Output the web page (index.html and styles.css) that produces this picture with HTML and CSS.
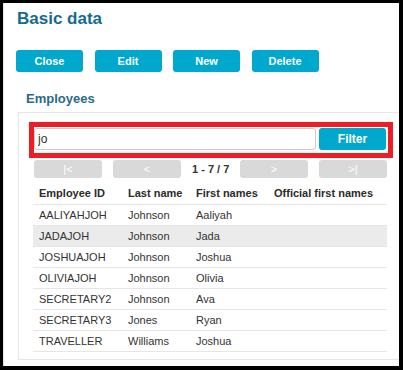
FILE: index.html
```html
<!DOCTYPE html>
<html>
<head>
<meta charset="utf-8">
<link rel="stylesheet" href="styles.css">
</head>
<body>
<div class="page">
  <h1 class="title">Basic data</h1>
  <div class="toolbar">
    <button class="btn">Close</button>
    <button class="btn">Edit</button>
    <button class="btn">New</button>
    <button class="btn">Delete</button>
  </div>
  <h2 class="section">Employees</h2>
  <div class="card">
    <div class="highlight">
      <div class="filter-row">
        <input class="search" type="text" value="jo">
        <button class="btn filter">Filter</button>
      </div>
    </div>
    <div class="pager">
      <span class="pbtn">|&lt;</span>
      <span class="pbtn">&lt;</span>
      <span class="count">1 - 7 / 7</span>
      <span class="pbtn">&gt;</span>
      <span class="pbtn">&gt;|</span>
    </div>
    <table class="grid">
      <colgroup>
        <col class="c1"><col class="c2"><col class="c3"><col class="c4">
      </colgroup>
      <thead>
        <tr><th>Employee ID</th><th>Last name</th><th>First names</th><th>Official first names</th></tr>
      </thead>
      <tbody>
        <tr><td>AALIYAHJOH</td><td>Johnson</td><td>Aaliyah</td><td></td></tr>
        <tr class="sel"><td>JADAJOH</td><td>Johnson</td><td>Jada</td><td></td></tr>
        <tr><td>JOSHUAJOH</td><td>Johnson</td><td>Joshua</td><td></td></tr>
        <tr><td>OLIVIAJOH</td><td>Johnson</td><td>Olivia</td><td></td></tr>
        <tr><td>SECRETARY2</td><td>Johnson</td><td>Ava</td><td></td></tr>
        <tr><td>SECRETARY3</td><td>Jones</td><td>Ryan</td><td></td></tr>
        <tr><td>TRAVELLER</td><td>Williams</td><td>Joshua</td><td></td></tr>
      </tbody>
    </table>
  </div>
</div>
</body>
</html>
```
FILE: styles.css
```css
* { box-sizing: border-box; }
html, body { margin: 0; padding: 0; }
body {
  background: #000;
  font-family: "Liberation Sans", Arial, sans-serif;
  width: 403px;
  height: 370px;
  overflow: hidden;
}
.page {
  margin: 3px 4px 4px 3px;
  width: 396px;
  height: 363px;
  background: #fff;
  border-left: 1px solid #e6e6e6;
  overflow: hidden;
}
.title {
  margin: 0;
  padding: 6px 0 0 13px;
  font-size: 17px;
  line-height: 20px;
  font-weight: bold;
  color: #146b92;
}
.toolbar {
  display: flex;
  gap: 11.5px;
  margin: 21px 0 0 12px;
}
.btn {
  border: none;
  border-radius: 3px;
  background: #00a8cd;
  color: #fff;
  font-family: "Liberation Sans", Arial, sans-serif;
  font-weight: bold;
  font-size: 11px;
  width: 67px;
  height: 22px;
  padding: 0;
}
.section {
  margin: 0;
  padding: 19px 0 0 22px;
  font-size: 13px;
  line-height: 16px;
  font-weight: bold;
  color: #2a6a8a;
}
.card {
  margin: 5px 0 0 14px;
  width: 400px;
  height: 248px;
  border: 1px solid #e6e6e6;
  padding: 9px 0 0 10px;
}
.highlight {
  width: 364px;
  border: 5px solid #ee1c25;
  padding: 1px 2px 3px 0;
}
.filter-row {
  display: flex;
  gap: 3px;
}
.search {
  width: 282px;
  height: 22px;
  border: 1px solid #cccccc;
  border-radius: 3px;
  padding: 0 3px;
  font-family: "Liberation Sans", Arial, sans-serif;
  font-size: 12px;
  color: #333;
  outline: none;
}
.filter { font-size: 12px; }
.pager {
  display: flex;
  align-items: center;
  gap: 11px;
  margin: 2px 0 0 5px;
  height: 18px;
}
.pbtn {
  width: 68px;
  height: 18px;
  background: #d9d9d9;
  border-radius: 3px;
  color: #fff;
  font-size: 11px;
  line-height: 18px;
  text-align: center;
}
.count {
  width: 37px;
  font-size: 11px;
  font-weight: bold;
  color: #333;
  text-align: center;
  white-space: nowrap;
}
.grid {
  margin: 5px 0 0 4px;
  width: 354px;
  border-collapse: collapse;
  table-layout: fixed;
  font-size: 11px;
  color: #333;
}
.c1 { width: 89px; }
.c2 { width: 68px; }
.c3 { width: 78px; }
.c4 { width: 119px; }
.grid th, .grid td {
  height: 21px;
  padding: 0 0 0 6px;
  text-align: left;
  border-bottom: 1px solid #e6e6e6;
  white-space: nowrap;
  vertical-align: middle;
}
.grid th { font-weight: bold; color: #2b2b2b; }
.grid tr.sel td { background: #ebebeb; }
```
